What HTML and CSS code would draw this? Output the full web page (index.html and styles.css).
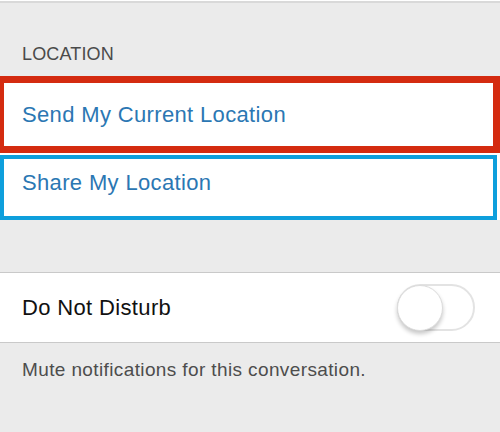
FILE: index.html
```html
<!DOCTYPE html>
<html lang="en">
<head>
  <meta charset="UTF-8" />
  <meta name="viewport" content="width=device-width, initial-scale=1.0"/>
  <title>Conversation Details</title>
  <link rel="stylesheet" href="styles.css">
</head>
<body>

<div class="top-edge"></div>

<div class="section-header">LOCATION</div>

<div class="location-rows">
  <div class="cell link-cell marked-red">Send My Current Location</div>
  <div class="cell link-cell marked-blue">Share My Location</div>
</div>

<div class="spacer"></div>

<div class="toggle-row">
  <span class="cell-label">Do Not Disturb</span>
  <div class="switch">
    <div class="knob"></div>
  </div>
</div>

<div class="section-footer">Mute notifications for this conversation.</div>

</body>
</html>
```

FILE: styles.css
```css
body {
  margin: 0;
  background-color: #ebebeb;
  font-family: 'Liberation Sans', Arial, sans-serif;
}

.top-edge {
  height: 1px;
  background-color: #ffffff;
  border-bottom: 2px solid #d9d9d9;
}

.section-header {
  padding: 42px 0 13px 22px;
  font-size: 18px;
  line-height: 18px;
  letter-spacing: 0.15px;
  color: #4a4a4a;
}

.location-rows {
  display: flex;
  flex-direction: column;
  gap: 2px;
  background-color: #ffffff;
}

.cell {
  font-size: 22px;
  line-height: 22px;
  letter-spacing: 0.35px;
}

.link-cell {
  color: #2b77b3;
  background-color: #ffffff;
}

.marked-red {
  border-style: solid;
  border-color: #d42b10;
  border-width: 7px 7px 7px 4px;
  padding: 21px 0 20px 18px;
}

.marked-blue {
  border: 4px solid #0e9fdc;
  margin-right: 3px;
  padding: 13px 0 22px 18px;
}

.spacer {
  height: 52px;
}

.toggle-row {
  display: flex;
  align-items: center;
  justify-content: space-between;
  height: 69px;
  padding: 0 25px 0 22px;
  background-color: #ffffff;
  border-top: 1px solid #c9c9c9;
  border-bottom: 1px solid #c9c9c9;
}

.cell-label {
  font-size: 22px;
  line-height: 22px;
  letter-spacing: 0.35px;
  color: #111111;
}

.switch {
  display: flex;
  align-items: center;
  width: 78px;
  height: 47px;
  box-sizing: border-box;
  border: 2px solid #e3e3e3;
  border-radius: 24px;
  background-color: #ffffff;
}

.knob {
  width: 46px;
  height: 46px;
  margin-left: -2px;
  flex-shrink: 0;
  box-sizing: border-box;
  border-radius: 50%;
  background-color: #ffffff;
  border: 1px solid #dcdcdc;
  box-shadow: 0 3px 4px rgba(0, 0, 0, 0.22);
}

.section-footer {
  padding: 17px 0 0 22px;
  font-size: 19px;
  line-height: 19px;
  letter-spacing: 0.38px;
  color: #4d4d4d;
}
```
